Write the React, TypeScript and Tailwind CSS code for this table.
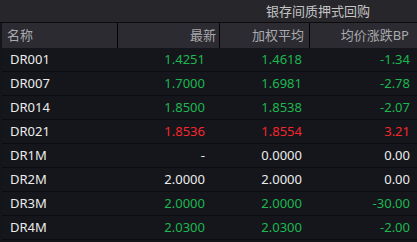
import React from 'react';

type Row = { name: string; last: string; avg: string; bp: string; c1: string; c2: string; c3: string };

const G = 'text-[#1db650]';
const R = 'text-[#f5262c]';
const W = 'text-[#ececec]';

const rows: Row[] = [
  { name: 'DR001', last: '1.4251', avg: '1.4618', bp: '-1.34', c1: G, c2: G, c3: G },
  { name: 'DR007', last: '1.7000', avg: '1.6981', bp: '-2.78', c1: G, c2: G, c3: G },
  { name: 'DR014', last: '1.8500', avg: '1.8538', bp: '-2.07', c1: G, c2: G, c3: G },
  { name: 'DR021', last: '1.8536', avg: '1.8554', bp: '3.21', c1: R, c2: R, c3: R },
  { name: 'DR1M', last: '-', avg: '0.0000', bp: '0.00', c1: W, c2: W, c3: W },
  { name: 'DR2M', last: '2.0000', avg: '2.0000', bp: '0.00', c1: W, c2: W, c3: W },
  { name: 'DR3M', last: '2.0000', avg: '2.0000', bp: '-30.00', c1: G, c2: G, c3: G },
  { name: 'DR4M', last: '2.0300', avg: '2.0300', bp: '-2.00', c1: G, c2: G, c3: G },
];

const font = { fontFamily: '"Noto Sans", "Noto Sans CJK SC", sans-serif' };

export default function App() {
  return (
    <div className="w-[417px] h-[242px] bg-[#131519] overflow-hidden text-[13px]" style={font}>
      <div className="grid grid-cols-[219px_198px] h-[23px] bg-[#26262b] border-b border-[#0c0c0e]">
        <div />
        <div className="flex items-center justify-center pt-[1px] text-[#c4c4c4]">银存间质押式回购</div>
      </div>
      <div className="ml-[2px] grid grid-cols-[115px_102px_90px_108px] h-[25px] bg-[#2b2b31] text-[#a9a9ad]">
        <div className="flex items-center pl-[5px] pt-[1px]">名称</div>
        <div className="flex items-center justify-end pr-[3px] pt-[1px] border-l border-[#050506]">最新</div>
        <div className="flex items-center justify-end pr-[5px] pt-[1px] border-l border-[#050506]">加权平均</div>
        <div className="flex items-center justify-end pr-[8px] pt-[1px] border-l border-[#050506]">均价涨跌BP</div>
      </div>
      <div className="ml-[2px]">
        {rows.map((r) => (
          <div key={r.name} className="grid grid-cols-[115px_102px_90px_108px] h-[24px] pt-[1px] border-b border-[#0b0c0f] bg-[#14161b]">
            <div className={`flex items-center pl-[8px] ${W}`}>{r.name}</div>
            <div className={`flex items-center justify-end pr-[14px] ${r.c1}`}>{r.last}</div>
            <div className={`flex items-center justify-end pr-[7px] ${r.c2}`}>{r.avg}</div>
            <div className={`flex items-center justify-end pr-[7px] ${r.c3}`}>{r.bp}</div>
          </div>
        ))}
      </div>
    </div>
  );
}
